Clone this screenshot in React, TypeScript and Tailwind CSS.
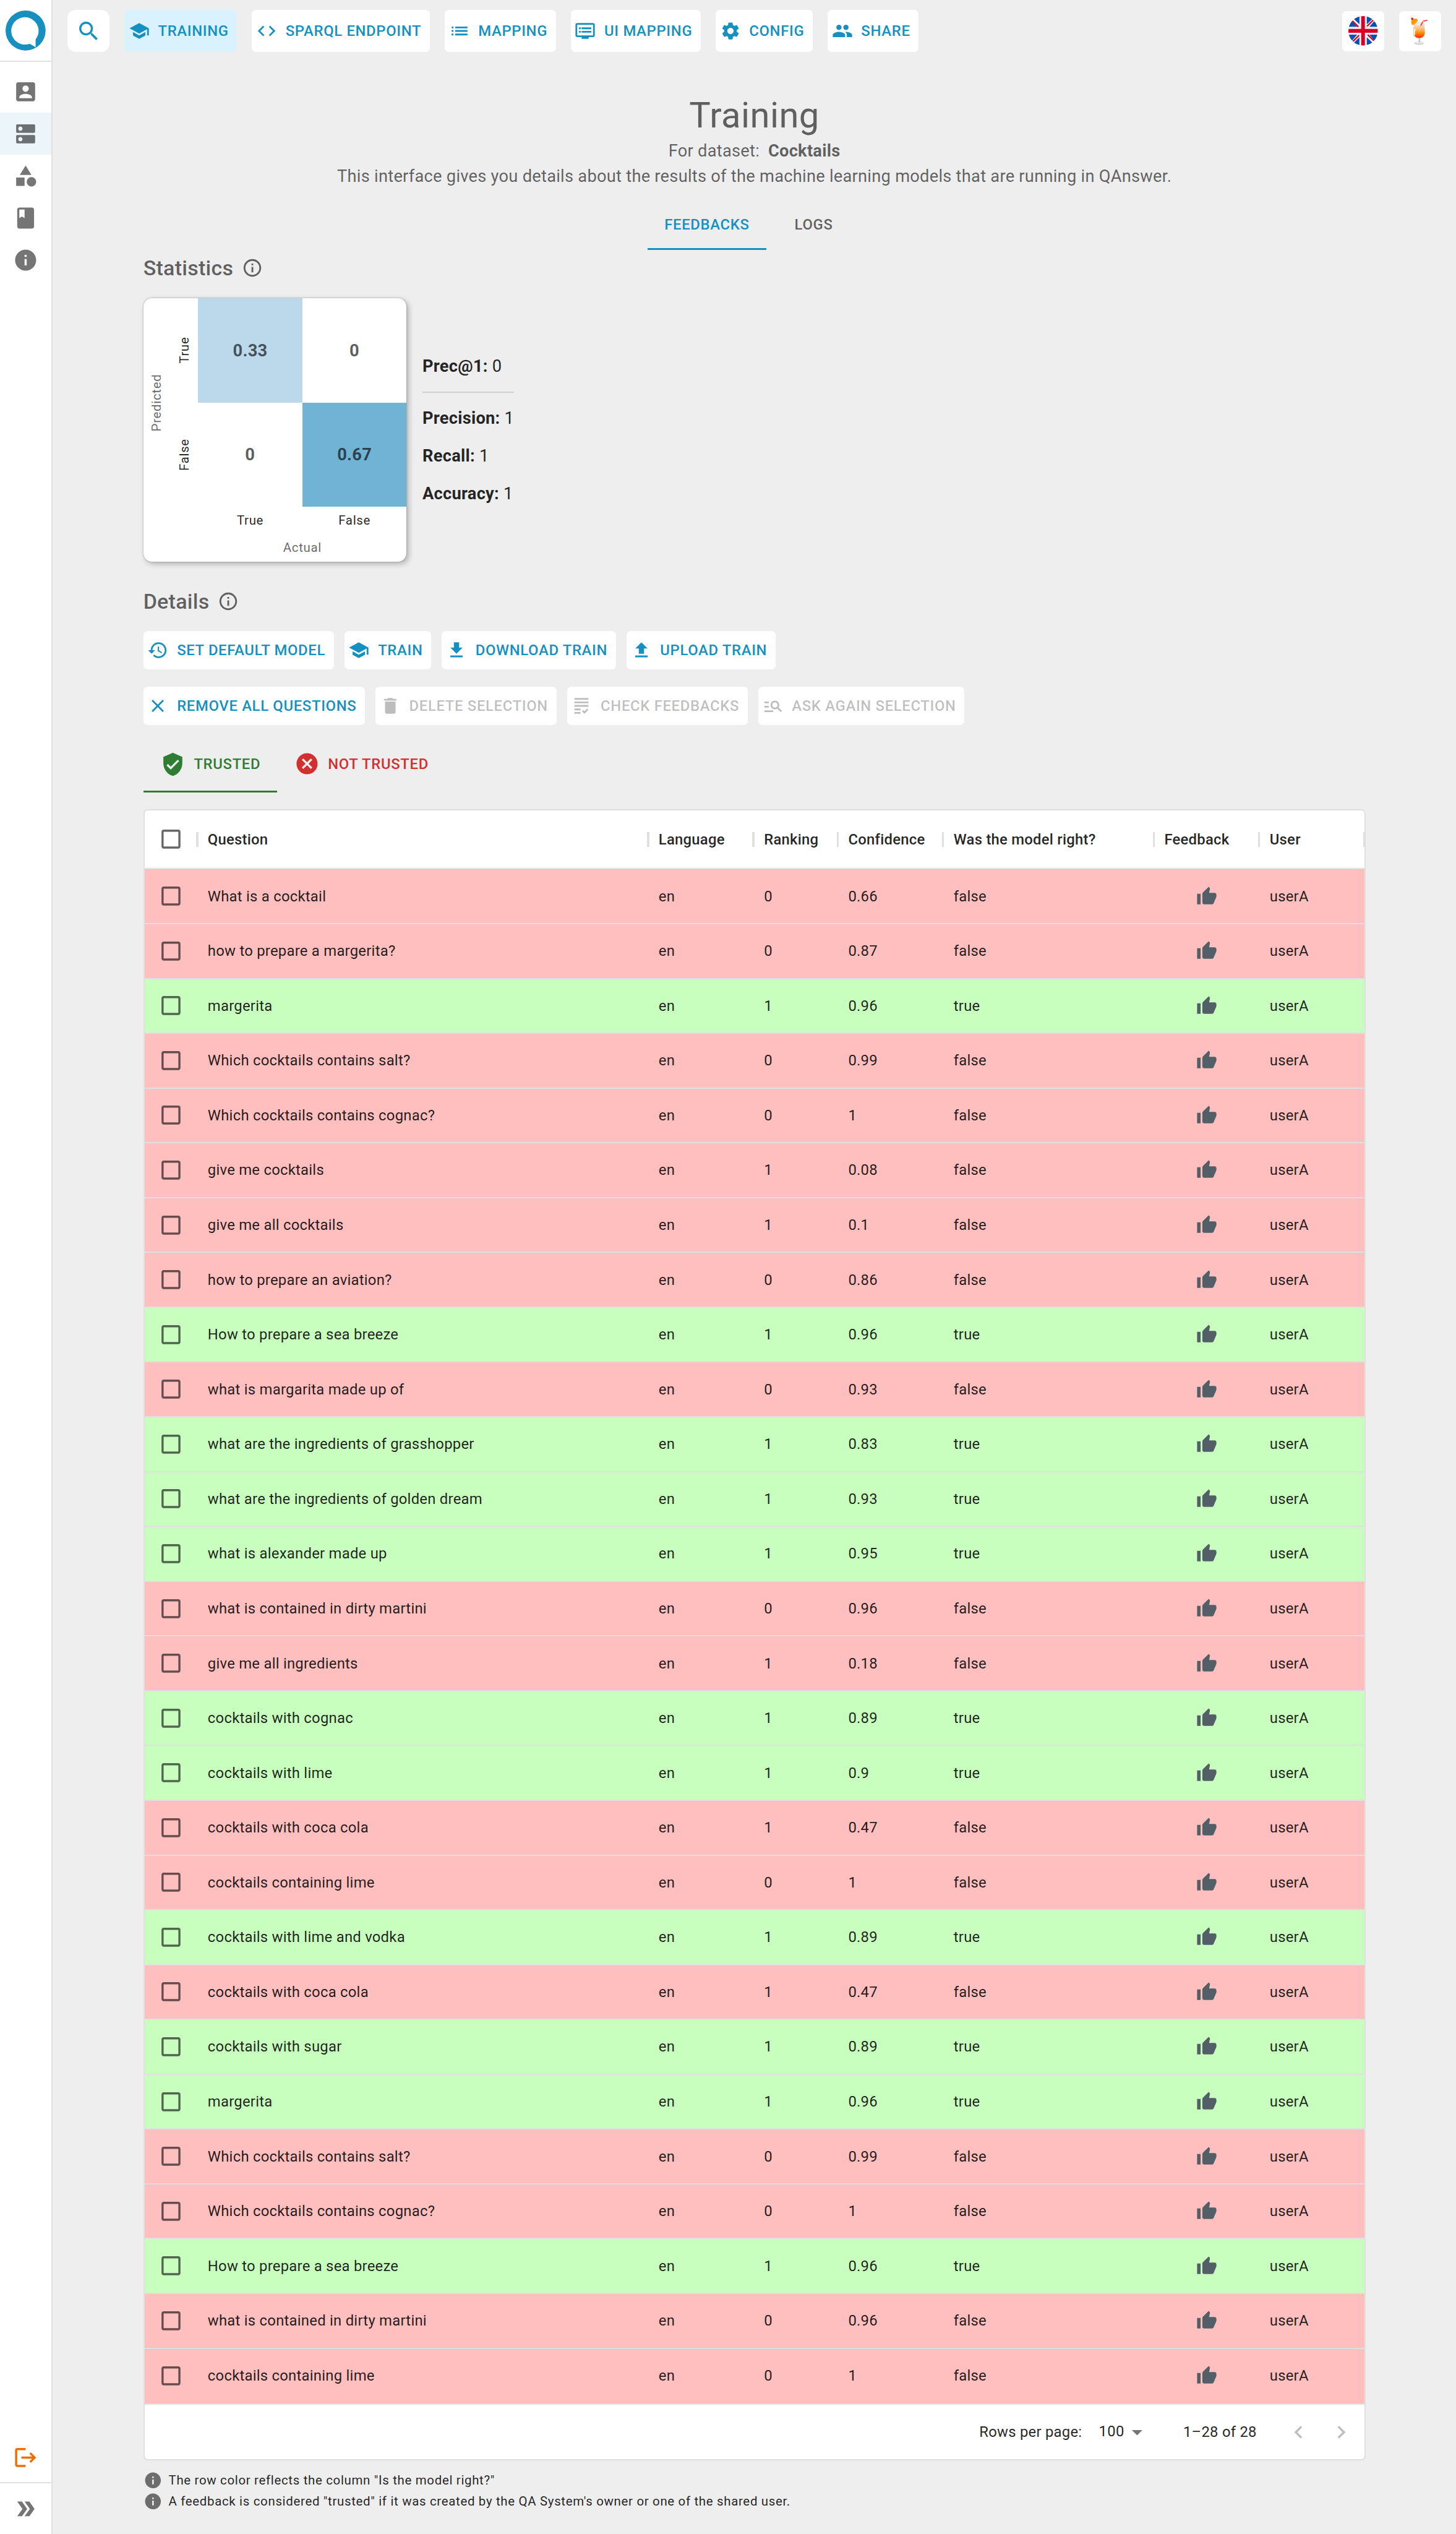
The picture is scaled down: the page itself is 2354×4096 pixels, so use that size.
import React from "react";

type IconProps = { d: string; className?: string };

const Icon = ({ d, className = "size-5" }: IconProps) => (
  <svg viewBox="0 0 24 24" fill="currentColor" className={`shrink-0 ${className}`}>
    <path d={d} />
  </svg>
);

const P = {
  account:
    "M3 5v14c0 1.1.89 2 2 2h14c1.1 0 2-.9 2-2V5c0-1.1-.9-2-2-2H5c-1.11 0-2 .9-2 2zm12 4c0 1.66-1.34 3-3 3s-3-1.34-3-3 1.34-3 3-3 3 1.34 3 3zm-9 8c0-2 4-3.1 6-3.1s6 1.1 6 3.1v1H6v-1z",
  dns: "M20 13H4c-.55 0-1 .45-1 1v6c0 .55.45 1 1 1h16c.55 0 1-.45 1-1v-6c0-.55-.45-1-1-1zM7 19c-1.1 0-2-.9-2-2s.9-2 2-2 2 .9 2 2-.9 2-2 2zM20 3H4c-.55 0-1 .45-1 1v6c0 .55.45 1 1 1h16c.55 0 1-.45 1-1V4c0-.55-.45-1-1-1zM7 9c-1.1 0-2-.9-2-2s.9-2 2-2 2 .9 2 2-.9 2-2 2z",
  category:
    "M12 2l-5.5 9h11zM17.5 13a4.5 4.5 0 1 0 0 9 4.5 4.5 0 1 0 0-9zM3 13.5h8v8H3z",
  book: "M18 2H6c-1.1 0-2 .9-2 2v16c0 1.1.9 2 2 2h12c1.1 0 2-.9 2-2V4c0-1.1-.9-2-2-2zM6 4h5v8l-2.5-1.5L6 12V4z",
  info: "M12 2C6.48 2 2 6.48 2 12s4.48 10 10 10 10-4.48 10-10S17.52 2 12 2zm1 15h-2v-6h2v6zm0-8h-2V7h2v2z",
  infoOutline:
    "M11 7h2v2h-2zm0 4h2v6h-2zm1-9C6.48 2 2 6.48 2 12s4.48 10 10 10 10-4.48 10-10S17.52 2 12 2zm0 18c-4.41 0-8-3.59-8-8s3.59-8 8-8 8 3.59 8 8-3.59 8-8 8z",
  logout:
    "M17 7l-1.41 1.41L18.17 11H8v2h10.17l-2.58 2.58L17 17l5-5zM4 5h8V3H4c-1.1 0-2 .9-2 2v14c0 1.1.9 2 2 2h8v-2H4V5z",
  doubleArrow: "M15.5 5H11l5 7-5 7h4.5l5-7zM8.5 5H4l5 7-5 7h4.5l5-7z",
  search:
    "M15.5 14h-.79l-.28-.27C15.41 12.59 16 11.11 16 9.5 16 5.91 13.09 3 9.5 3S3 5.91 3 9.5 5.91 16 9.5 16c1.61 0 3.09-.59 4.23-1.57l.27.28v.79l5 4.99L20.49 19l-4.99-5zm-6 0C7.01 14 5 11.99 5 9.5S7.01 5 9.5 5 14 7.01 14 9.5 11.99 14 9.5 14z",
  school: "M5 13.18v4L12 21l7-3.82v-4L12 17l-7-3.82zM12 3L1 9l11 6 9-4.91V17h2V9L12 3z",
  code: "M9.4 16.6L4.8 12l4.6-4.6L8 6l-6 6 6 6 1.4-1.4zm5.2 0l4.6-4.6-4.6-4.6L16 6l6 6-6 6-1.4-1.4z",
  list: "M3 13h2v-2H3v2zm0 4h2v-2H3v2zm0-8h2V7H3v2zm4 4h14v-2H7v2zm0 4h14v-2H7v2zM7 7v2h14V7H7z",
  dvr: "M21 3H3c-1.1 0-2 .9-2 2v12c0 1.1.9 2 2 2h5v2h8v-2h5c1.1 0 1.99-.9 1.99-2L23 5c0-1.1-.9-2-2-2zm0 14H3V5h18v12zm-2-9H8v2h11V8zm0 4H8v2h11v-2zM7 8H5v2h2V8zm0 4H5v2h2v-2z",
  settings:
    "M19.14 12.94c.04-.3.06-.61.06-.94 0-.32-.02-.64-.07-.94l2.03-1.58c.18-.14.23-.41.12-.61l-1.92-3.32c-.12-.22-.37-.29-.59-.22l-2.39.96c-.5-.38-1.03-.7-1.62-.94l-.36-2.54c-.04-.24-.24-.41-.48-.41h-3.84c-.24 0-.43.17-.47.41l-.36 2.54c-.59.24-1.13.57-1.62.94l-2.39-.96c-.22-.08-.47 0-.59.22L2.74 8.87c-.12.21-.08.47.12.61l2.03 1.58c-.05.3-.09.63-.09.94s.02.64.07.94l-2.03 1.58c-.18.14-.23.41-.12.61l1.92 3.32c.12.22.37.29.59.22l2.39-.96c.5.38 1.03.7 1.62.94l.36 2.54c.05.24.24.41.48.41h3.84c.24 0 .44-.17.47-.41l.36-2.54c.59-.24 1.13-.56 1.62-.94l2.39.96c.22.08.47 0 .59-.22l1.92-3.32c.12-.22.07-.47-.12-.61l-2.01-1.58zM12 15.6c-1.98 0-3.6-1.62-3.6-3.6s1.62-3.6 3.6-3.6 3.6 1.62 3.6 3.6-1.62 3.6-3.6 3.6z",
  group:
    "M16 11c1.66 0 2.99-1.34 2.99-3S17.66 5 16 5c-1.66 0-3 1.34-3 3s1.34 3 3 3zm-8 0c1.66 0 2.99-1.34 2.99-3S9.66 5 8 5C6.34 5 5 6.34 5 8s1.34 3 3 3zm0 2c-2.33 0-7 1.17-7 3.5V19h14v-2.5c0-2.33-4.67-3.5-7-3.5zm8 0c-.29 0-.62.02-.97.05 1.16.84 1.97 1.97 1.97 3.45V19h6v-2.5c0-2.33-4.67-3.5-7-3.5z",
  history:
    "M13 3c-4.97 0-9 4.03-9 9H1l3.89 3.89.07.14L9 12H6c0-3.87 3.13-7 7-7s7 3.13 7 7-3.13 7-7 7c-1.93 0-3.68-.79-4.94-2.06l-1.42 1.42C8.27 19.99 10.51 21 13 21c4.97 0 9-4.03 9-9s-4.03-9-9-9zm-1 5v5l4.28 2.54.72-1.21-3.5-2.08V8H12z",
  download: "M19 9h-4V3H9v6H5l7 7 7-7zM5 18v2h14v-2H5z",
  upload: "M9 16h6v-6h4l-7-7-7 7h4zm-4 2h14v2H5z",
  close:
    "M19 6.41L17.59 5 12 10.59 6.41 5 5 6.41 10.59 12 5 17.59 6.41 19 12 13.41 17.59 19 19 17.59 13.41 12z",
  remove: "M6 19c0 1.1.9 2 2 2h8c1.1 0 2-.9 2-2V7H6v12zM19 4h-3.5l-1-1h-5l-1 1H5v2h14V4z",
  grading:
    "M4 7h16v2H4V7zm0 6h16v-2H4v2zm0 4h7v-2H4v2zm0 4h7v-2H4v2zm11.41-2.83L14 16.75l-1.41 1.41L15.41 21 20 16.42 18.58 15l-3.17 3.17zM4 3v2h16V3H4z",
  manageSearch:
    "M7 9H2V7h5v2zm0 3H2v2h5v-2zm13.59 7l-3.83-3.83c-.8.52-1.74.83-2.76.83-2.76 0-5-2.24-5-5s2.24-5 5-5 5 2.24 5 5c0 1.02-.31 1.96-.83 2.75L22 17.59 20.59 19zM17 11c0-1.65-1.35-3-3-3s-3 1.35-3 3 1.35 3 3 3 3-1.35 3-3zM2 19h10v-2H2v2z",
  verified:
    "M12 1L3 5v6c0 5.55 3.84 10.74 9 12 5.16-1.26 9-6.45 9-12V5l-9-4zm-2 16l-4-4 1.41-1.41L10 14.17l6.59-6.59L18 9l-8 8z",
  cancel:
    "M12 2C6.47 2 2 6.47 2 12s4.47 10 10 10 10-4.47 10-10S17.53 2 12 2zm5 13.59L15.59 17 12 13.41 8.41 17 7 15.59 10.59 12 7 8.41 8.41 7 12 10.59 15.59 7 17 8.41 13.41 12 17 15.59z",
  checkbox:
    "M19 5v14H5V5h14m0-2H5c-1.1 0-2 .9-2 2v14c0 1.1.9 2 2 2h14c1.1 0 2-.9 2-2V5c0-1.1-.9-2-2-2z",
  thumb:
    "M1 21h4V9H1v12zm22-11c0-1.1-.9-2-2-2h-6.31l.95-4.57.03-.32c0-.41-.17-.79-.44-1.06L14.17 1 7.59 7.59C7.22 7.95 7 8.45 7 9v10c0 1.1.9 2 2 2h9c.83 0 1.54-.5 1.84-1.22l3.02-7.05c.09-.23.14-.47.14-.73v-2z",
  dropDown: "M7 10l5 5 5-5z",
  left: "M15.41 16.59L10.83 12l4.58-4.59L14 6l-6 6 6 6 1.41-1.41z",
  right: "M8.59 16.59L13.17 12 8.59 7.41 10 6l6 6-6 6-1.41-1.41z",
};

const Logo = () => (
  <svg viewBox="0 0 228 228" className="size-[38px]">
    <circle cx="114" cy="114" r="114" fill="#1590c1" />
    <path d="M171 165 A78 78 0 1 0 138 189 L171 209 Z" fill="#fff" />
  </svg>
);

const Flag = () => (
  <svg viewBox="0 0 168 168" className="size-7">
    <defs>
      <clipPath id="flag-disc">
        <circle cx="84" cy="84" r="84" />
      </clipPath>
    </defs>
    <g clipPath="url(#flag-disc)">
      <rect width="168" height="168" fill="#f0f0f0" />
      <g fill="#0052b4">
        <path d="M63 -10V47L20 5z M0 61V22L10 16L50 61z" />
        <path d="M105 -10V47L148 5z M168 61V22L158 16L120 61z" />
        <path d="M63 178V121L20 163z M0 106V146L10 152L50 106z" />
        <path d="M105 178V121L148 163z M168 106V146L158 152L120 106z" />
      </g>
      <g stroke="#d80027" strokeWidth="8">
        <path d="M22 27L57 61M142 22L106 58M26 144L61 109M110 106L145 140" />
      </g>
      <path d="M73 0H94V73H168V95H94V168H73V95H0V73H73z" fill="#d80027" />
    </g>
  </svg>
);

const Cocktail = () => (
  <svg viewBox="0 0 240 228" className="h-[38px] w-10">
    <defs>
      <linearGradient id="drink" x1="0" y1="0" x2="0" y2="1">
        <stop offset="0" stopColor="#f8d8b8" />
        <stop offset="0.3" stopColor="#fcb978" />
        <stop offset="0.55" stopColor="#ff9800" />
        <stop offset="0.85" stopColor="#ff4a12" />
        <stop offset="1" stopColor="#f63c10" />
      </linearGradient>
    </defs>
    <ellipse cx="113" cy="182" rx="26" ry="9" fill="#bdbdbd" />
    <ellipse cx="113" cy="179" rx="24" ry="7" fill="#ececec" />
    <path d="M109 152h9v28h-9z" fill="#dedede" />
    <path d="M116 152h3v26h-3z" fill="#9e9e9e" />
    <path
      d="M86 66 C86 88 78 100 79 122 C80 144 96 157 114 157 C134 157 149 142 149 122 C149 102 143 88 143 66z"
      fill="#dcdcdc"
    />
    <path
      d="M87 82 C85 98 81 106 82 122 C83 141 97 153 114 153 C131 153 146 141 146 122 C146 106 143 98 142 82z"
      fill="url(#drink)"
    />
    <ellipse cx="115" cy="71" rx="29" ry="9" fill="#e4e4e4" />
    <ellipse cx="115" cy="74" rx="23" ry="6" fill="#f5ead8" />
    <path d="M90 104c-4 9-5 18-2 28" stroke="#fff" strokeWidth="7" strokeLinecap="round" fill="none" />
    <path d="M123 83L137 57L161 52" stroke="#ef2b2b" strokeWidth="6" fill="none" />
    <path d="M134 63L139 56" stroke="#f9a9a9" strokeWidth="4" />
    <path d="M72 76C66 62 68 50 78 45L98 42C106 46 108 53 105 59L88 75C82 80 76 81 72 76z" fill="#ff9f0f" />
    <path d="M78 72L82 56L98 48" stroke="#f57c00" strokeWidth="3" fill="none" />
    <circle cx="75" cy="44" r="7" fill="#d3284b" />
    <path d="M66 34l6 5" stroke="#e0a050" strokeWidth="3" />
  </svg>
);

type BtnProps = { icon: string; label: string; className?: string };

const Btn = ({ icon, label, className = "bg-white text-[#1590c1]" }: BtnProps) => (
  <div
    className={`flex items-center rounded-[4px] pr-2 pl-1 text-sm font-medium tracking-[0.02857em] whitespace-nowrap ${className}`}
  >
    <Icon d={icon} />
    <span className="ml-2">{label}</span>
  </div>
);

const NAV = [
  { icon: P.school, label: "TRAINING", active: true },
  { icon: P.code, label: "SPARQL ENDPOINT" },
  { icon: P.list, label: "MAPPING" },
  { icon: P.dvr, label: "UI MAPPING" },
  { icon: P.settings, label: "CONFIG" },
  { icon: P.group, label: "SHARE" },
];

const SIDE = [
  { icon: P.account },
  { icon: P.dns, active: true },
  { icon: P.category },
  { icon: P.book },
  { icon: P.info },
];

const ROWS: [string, string, string, boolean][] = [
  ["What is a cocktail", "0", "0.66", false],
  ["how to prepare a margerita?", "0", "0.87", false],
  ["margerita", "1", "0.96", true],
  ["Which cocktails contains salt?", "0", "0.99", false],
  ["Which cocktails contains cognac?", "0", "1", false],
  ["give me cocktails", "1", "0.08", false],
  ["give me all cocktails", "1", "0.1", false],
  ["how to prepare an aviation?", "0", "0.86", false],
  ["How to prepare a sea breeze", "1", "0.96", true],
  ["what is margarita made up of", "0", "0.93", false],
  ["what are the ingredients of grasshopper", "1", "0.83", true],
  ["what are the ingredients of golden dream", "1", "0.93", true],
  ["what is alexander made up", "1", "0.95", true],
  ["what is contained in dirty martini", "0", "0.96", false],
  ["give me all ingredients", "1", "0.18", false],
  ["cocktails with cognac", "1", "0.89", true],
  ["cocktails with lime", "1", "0.9", true],
  ["cocktails with coca cola", "1", "0.47", false],
  ["cocktails containing lime", "0", "1", false],
  ["cocktails with lime and vodka", "1", "0.89", true],
  ["cocktails with coca cola", "1", "0.47", false],
  ["cocktails with sugar", "1", "0.89", true],
  ["margerita", "1", "0.96", true],
  ["Which cocktails contains salt?", "0", "0.99", false],
  ["Which cocktails contains cognac?", "0", "1", false],
  ["How to prepare a sea breeze", "1", "0.96", true],
  ["what is contained in dirty martini", "0", "0.96", false],
  ["cocktails containing lime", "0", "1", false],
];

const HEADERS = ["Question", "Language", "Ranking", "Confidence", "Was the model right?", "Feedback", "User"];

const COLS = "grid grid-cols-[50px_428px_100px_80px_100px_200px_100px_100px] items-center";

const Sidebar = () => (
  <aside className="flex w-[50px] shrink-0 flex-col border-r-[1.2px] border-[#e0e0e0] bg-white text-black/54">
    <div className="flex h-[59px] items-center justify-center border-b-[1.2px] border-[#e0e0e0]">
      <Logo />
    </div>
    <div className="mt-2 flex flex-col">
      {SIDE.map((s, i) => (
        <div key={i} className={`flex h-10 items-center justify-center ${s.active ? "bg-[#ecf5f9]" : ""}`}>
          <Icon d={s.icon} className="size-6" />
        </div>
      ))}
    </div>
    <div className="mt-auto flex h-12 items-center justify-center border-b-[1.2px] border-[#e0e0e0] text-[#ef6c00]">
      <Icon d={P.logout} className="size-6" />
    </div>
    <div className="flex h-12 items-center justify-center">
      <Icon d={P.doubleArrow} className="size-6" />
    </div>
  </aside>
);

const TopBar = () => (
  <header className="flex h-[59px] items-center gap-3.5 px-3.5">
    <div className="flex size-10 items-center justify-center rounded-lg bg-white text-[#1590c1]">
      <Icon d={P.search} className="size-6" />
    </div>
    {NAV.map((n) => (
      <Btn
        key={n.label}
        icon={n.icon}
        label={n.label}
        className={n.active ? "h-10 bg-[#d9f2fe] text-[#1590c1]" : "h-10 bg-white text-[#1590c1]"}
      />
    ))}
    <div className="ml-auto flex h-[38px] w-10 items-center justify-center rounded bg-white">
      <Flag />
    </div>
    <div className="flex h-[38px] w-10 items-center justify-center rounded bg-white">
      <Cocktail />
    </div>
  </header>
);

const SectionTitle = ({ text }: { text: string }) => (
  <div className="flex h-8 items-center gap-2 text-black/60">
    <h2 className="text-xl leading-8 font-medium tracking-[0.0075em]">{text}</h2>
    <Icon d={P.infoOutline} />
  </div>
);

const Vertical = ({ text }: { text: string }) => (
  <span className="-rotate-90 text-xs leading-5 tracking-[0.03333em] whitespace-nowrap">{text}</span>
);

const Matrix = () => (
  <div className="grid size-[250px] grid-cols-[26px_26px_99px_99px] grid-rows-[99px_99px_26px_26px] place-items-center overflow-hidden rounded-lg bg-white text-xs tracking-[0.03333em] text-black/87 shadow-[2px_2px_5px_rgba(0,0,0,0.24),0_0_1.5px_rgba(0,0,0,0.3)]">
    <div className="col-start-1 row-span-2 row-start-1 flex w-[26px] items-center justify-center text-black/60">
      <Vertical text="Predicted" />
    </div>
    <div className="col-start-2 row-start-1 flex w-[26px] items-center justify-center">
      <Vertical text="True" />
    </div>
    <div className="col-start-2 row-start-2 flex w-[26px] items-center justify-center">
      <Vertical text="False" />
    </div>
    <div className="col-start-3 row-start-1 flex size-full items-center justify-center bg-[#bbd9eb] pt-px text-base font-bold tracking-[0.00938em] text-black/65">
      0.33
    </div>
    <div className="col-start-4 row-start-1 pt-px text-base font-bold text-black/65">0</div>
    <div className="col-start-3 row-start-2 pt-px text-base font-bold text-black/65">0</div>
    <div className="col-start-4 row-start-2 flex size-full items-center justify-center bg-[#70b3d4] pt-px text-base font-bold tracking-[0.00938em] text-black/65">
      0.67
    </div>
    <div className="col-start-3 row-start-3 font-normal">True</div>
    <div className="col-start-4 row-start-3 font-normal">False</div>
    <div className="col-span-2 col-start-3 row-start-4 text-black/60">Actual</div>
  </div>
);

const Stat = ({ name, value }: { name: string; value: string }) => (
  <div className="h-6 pt-[0.5px] leading-6">
    <b className="font-bold">{name}:</b> {value}
  </div>
);

const Table = () => (
  <div className="mt-4 flex h-[1567px] w-[1160px] flex-col overflow-hidden rounded-[4px] border-[1.2px] border-[#e0e0e0] bg-white text-sm tracking-[0.01071em] text-black/87">
    <div className={`h-14 shrink-0 border-b-[1.2px] border-[#e0e0e0] font-medium ${COLS}`}>
      <div className="relative flex items-center justify-center text-black/60">
        <Icon d={P.checkbox} className="size-6" />
        <span className="absolute -right-px h-3.5 w-0.5 bg-[#e0e0e0]" />
      </div>
      {HEADERS.map((h) => (
        <div key={h} className="relative flex items-center px-2.5 whitespace-nowrap">
          {h}
          <span className="absolute -right-px h-3.5 w-0.5 bg-[#e0e0e0]" />
        </div>
      ))}
    </div>
    {ROWS.map(([q, rank, conf, ok], i) => (
      <div
        key={i}
        className={`h-[52px] shrink-0 ${i < ROWS.length - 1 ? "border-b-[1.2px] border-[#e0e0e0]" : "pb-px"} ${ok ? "bg-[#c8ffbf]" : "bg-[#ffbfbf]"} ${COLS}`}
      >
        <div className="flex justify-center text-black/60">
          <Icon d={P.checkbox} className="size-6" />
        </div>
        <div className="px-2.5">{q}</div>
        <div className="px-2.5">en</div>
        <div className="px-2.5">{rank}</div>
        <div className="px-2.5">{conf}</div>
        <div className="px-2.5">{ok ? "true" : "false"}</div>
        <div className="flex justify-center text-[#525f66]">
          <Icon d={P.thumb} />
        </div>
        <div className="px-2.5">userA</div>
      </div>
    ))}
    <div className="flex grow items-center justify-end border-t-[1.2px] border-[#e0e0e0] pr-0.5">
      <span>Rows per page:</span>
      <div className="mr-8 ml-2 flex items-center pl-2">
        <span className="-mt-px">100</span>
        <Icon d={P.dropDown} className="size-6 text-black/54" />
      </div>
      <span>1–28 of 28</span>
      <div className="ml-5 flex text-black/26">
        <Icon d={P.left} className="mx-2 size-6" />
        <Icon d={P.right} className="mx-2 size-6" />
      </div>
    </div>
  </div>
);

const Note = ({ text }: { text: string }) => (
  <div className="flex h-5 items-center gap-1.5 text-xs tracking-[0.03333em] text-black/87">
    <Icon d={P.info} className="size-[18px] text-black/54" />
    {text}
  </div>
);

const DISABLED = "h-[36.5px] bg-white text-black/26";
const ENABLED = "h-[36.5px] bg-white text-[#1590c1]";

export default function App() {
  return (
    <div className="flex h-[2404.7px] w-[1382px] overflow-hidden bg-[#eeeeee] font-['Roboto',sans-serif] text-black/87 [zoom:1.70333]">
      <Sidebar />
      <main className="flex grow flex-col">
        <TopBar />
        <div className="mx-auto flex w-[1160px] flex-col">
          <div className="mt-[29.5px] flex flex-col items-center text-base leading-6 tracking-[0.00938em] text-black/60">
            <h1 className="h-[43px] text-[34px] leading-[42px] tracking-[0.00735em]">Training</h1>
            <p>
              For dataset: <b className="ml-1 font-bold">Cocktails</b>
            </p>
            <p>
              This interface gives you details about the results of the machine learning models that are running in
              QAnswer.
            </p>
          </div>
          <div className="mt-[9.5px] flex h-12 justify-center text-sm font-medium tracking-[0.02857em] text-black/60">
            <div className="flex items-center border-b-2 border-[#1590c1] px-4 pt-0.5 text-[#1590c1]">FEEDBACKS</div>
            <div className="flex w-[90px] items-center justify-center">LOGS</div>
          </div>
          <div className="mt-[1.5px]">
            <SectionTitle text="Statistics" />
          </div>
          <div className="mt-[12.5px] flex items-center gap-[15px]">
            <Matrix />
            <div className="flex flex-col gap-3 text-base tracking-[0.00938em] text-black/87">
              <Stat name="Prec@1" value="0" />
              <div className="h-[1.2px] bg-[#d0d0d0]" />
              <Stat name="Precision" value="1" />
              <Stat name="Recall" value="1" />
              <Stat name="Accuracy" value="1" />
            </div>
          </div>
          <div className="mt-[22px]">
            <SectionTitle text="Details" />
          </div>
          <div className="mt-3 flex gap-2.5">
            <Btn icon={P.history} label="SET DEFAULT MODEL" className={ENABLED} />
            <Btn icon={P.school} label="TRAIN" className={ENABLED} />
            <Btn icon={P.download} label="DOWNLOAD TRAIN" className={ENABLED} />
            <Btn icon={P.upload} label="UPLOAD TRAIN" className={ENABLED} />
          </div>
          <div className="mt-4 flex gap-2.5">
            <Btn icon={P.close} label="REMOVE ALL QUESTIONS" className={ENABLED} />
            <Btn icon={P.remove} label="DELETE SELECTION" className={DISABLED} />
            <Btn icon={P.grading} label="CHECK FEEDBACKS" className={DISABLED} />
            <Btn icon={P.manageSearch} label="ASK AGAIN SELECTION" className={DISABLED} />
          </div>
          <div className="mt-2.5 flex h-[54px] text-sm font-medium tracking-[0.02857em]">
            <div className="flex items-center gap-2 border-b-2 border-[#2e7d32] px-4 pt-0.5 text-[#2e7d32]">
              <Icon d={P.verified} className="size-6" />
              TRUSTED
            </div>
            <div className="flex items-center gap-2 px-4 text-[#d32f2f]">
              <Icon d={P.cancel} className="size-6" />
              NOT TRUSTED
            </div>
          </div>
          <Table />
          <div className="mt-[9px]">
            <Note text={'The row color reflects the column "Is the model right?"'} />
            <Note text={"A feedback is considered \"trusted\" if it was created by the QA System's owner or one of the shared user."} />
          </div>
        </div>
      </main>
    </div>
  );
}
